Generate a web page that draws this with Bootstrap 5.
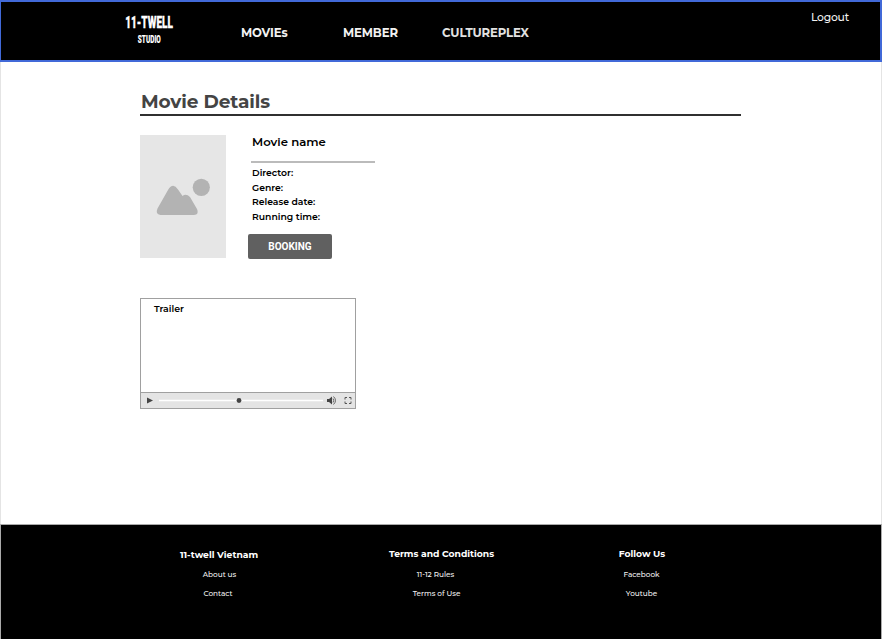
<!DOCTYPE html>
<html lang="en">
<head>
<meta charset="utf-8">
<meta name="viewport" content="width=device-width, initial-scale=1">
<title>Movie Details</title>
<link href="https://cdn.jsdelivr.net/npm/bootstrap@5.3.0/dist/css/bootstrap.min.css" rel="stylesheet">
<style>
body{font-family:Montserrat,Inter,"Open Sans",sans-serif;color:#000;background:#fff;height:639px;overflow:hidden}
.site-head{height:62px;background:#000;border:2px solid #4169d8;border-left-width:1px}
.logo{margin:7px 0 0 121px;width:54px;height:42px}
.menu{margin:22px 0 0 65px;font-size:11.7px;line-height:18px;font-weight:700}
.menu a,.logout,.foot a{color:#f2f2f2;text-decoration:none;white-space:nowrap}
.menu .m1{width:102px;letter-spacing:-.1px}
.menu .m2{width:99px;letter-spacing:-.1px}
.menu .m3{color:#e2e2e2;letter-spacing:-.12px}
.logout{font-size:10.8px;line-height:16px;font-weight:500;letter-spacing:-.2px;margin:8px 31px 0 0}
.page-main{height:462px;padding:27px 0 0 139px;border:solid #e4e4e4;border-width:0 1px}
.details{width:601px}
.title{height:27px;font-size:18.5px;line-height:26px;font-weight:700;letter-spacing:-.08px;color:#444;margin:0 0 20px;padding-left:1px;border-bottom:2px solid #303030}
.poster{width:86px;height:123px;background:#e6e6e6;margin-top:-1px}
.info{margin-left:22px;margin-top:-1px}
.name{width:124px;height:28px;margin:0 0 0 3px;padding-left:1px;font-size:11.7px;line-height:14px;font-weight:600;border-bottom:2px solid #bbb}
.facts{margin:3px 0 0 4px;font-size:9.25px;line-height:14.7px;font-weight:600;height:68px}
.book{width:84px;height:25px;padding:0;border:0;border-radius:2px;background:#606060;color:#fff;font:700 10px/25px Roboto,"Liberation Sans",Arial,sans-serif}
.player{width:216px;height:111px;margin-top:39px;border:1px solid #a0a0a0}
.trailer{height:93px;padding:3px 0 0 13px;font-size:9.4px;line-height:14px;font-weight:600}
.controls{height:16px;border-top:1px solid #a0a0a0;background:#e4e4e4}
.foot{height:115px;background:#000;border:solid #aaa;border-width:1px 1px 0;color:#fff;text-align:center;font-size:7.3px;font-weight:500;line-height:19px;padding-top:19px}
.foot h2{font-size:9.2px;line-height:20px;font-weight:700;margin:0 0 1px;white-space:nowrap}
.f1{width:130px;margin-left:153px}
.f1 h2{padding-top:1px;height:20px}
.f1 a:last-child{padding-right:3px}
.f1 a{padding-left:1px}
.f2{width:130px;margin-left:93px}
.f2 h2{padding-right:1px}
.f2 a{padding-right:11px}
.f2 a:first-of-type{padding-right:13px}
.f3{width:130px;margin-left:70px}
.f3 a{padding-right:1px}
</style>
</head>
<body>
<header class="site-head d-flex align-items-start">
  <a href="#" class="logo d-block" aria-label="11-Twell Studio">
    <svg class="d-block" width="54" height="42" viewBox="0 0 54 42" fill="#fff" font-family="Roboto,'Liberation Sans',Arial,sans-serif" font-weight="900" stroke="#fff" stroke-width=".3">
      <text transform="translate(3.300 18.500) scale(.625 1)" font-size="17" textLength="76" lengthAdjust="spacingAndGlyphs">11-TWELL</text>
      <text transform="translate(15.800 34.300) scale(.5 1)" font-size="11" stroke-width=".1" textLength="46" lengthAdjust="spacingAndGlyphs">STUDIO</text>
    </svg>
  </a>
  <nav class="menu d-flex"><a class="m1" href="#">MOVIEs</a><a class="m2" href="#">MEMBER</a><a class="m3" href="#">CULTUREPLEX</a></nav>
  <a class="logout ms-auto" href="#">Logout</a>
</header>
<main class="page-main">
  <div class="details">
    <h1 class="title">Movie Details</h1>
    <section class="d-flex align-items-start">
      <div class="poster"><svg class="d-block" width="86" height="123" viewBox="0 0 86 123" fill="#b3b3b3"><circle cx="61.3" cy="52.3" r="8.6"/><path d="M17.500 73.500 28 55Q33 47 38 54.500L42.500 61Q46 58 50 62L57 74Q59.500 79.500 54 80H20.500Q15 79 17.500 73.500Z"/></svg></div>
      <div class="info">
        <h2 class="name">Movie name</h2>
        <div class="facts"><div>Director:</div><div>Genre:</div><div>Release date:</div><div>Running time:</div></div>
        <button class="btn book d-block" type="button">BOOKING</button>
      </div>
    </section>
    <section class="player">
      <div class="trailer">Trailer</div>
      <div class="controls"><svg class="d-block" width="214" height="15" viewBox="0 0 214 15"><path d="M6 4.500v6l6-3z" fill="#444"/><path d="M18 7.500H182" stroke="#fff" stroke-width="1.300"/><circle cx="98" cy="7.500" r="2.400" fill="#444"/><path d="M186 6h2l3-2.500v8l-3-2.500h-2z" fill="#444"/><path d="M192 5.500q1.500 2 0 4M192.500 3.500q4 4 0 8" fill="none" stroke="#555" stroke-width=".9"/><path d="M204 6.500V4.500h2M208 4.500h2v2M210 8.500v2h-2M206 10.500h-2v-2" fill="none" stroke="#555"/></svg></div>
    </section>
  </div>
</main>
<footer class="foot d-flex align-items-start">
  <div class="f1"><h2>11-twell Vietnam</h2><a class="d-block" href="#">About us</a><a class="d-block" href="#">Contact</a></div>
  <div class="f2"><h2>Terms and Conditions</h2><a class="d-block" href="#">11-12 Rules</a><a class="d-block" href="#">Terms of Use</a></div>
  <div class="f3"><h2>Follow Us</h2><a class="d-block" href="#">Facebook</a><a class="d-block" href="#">Youtube</a></div>
</footer>
<script src="https://cdn.jsdelivr.net/npm/bootstrap@5.3.0/dist/js/bootstrap.bundle.min.js"></script>
</body>
</html>
